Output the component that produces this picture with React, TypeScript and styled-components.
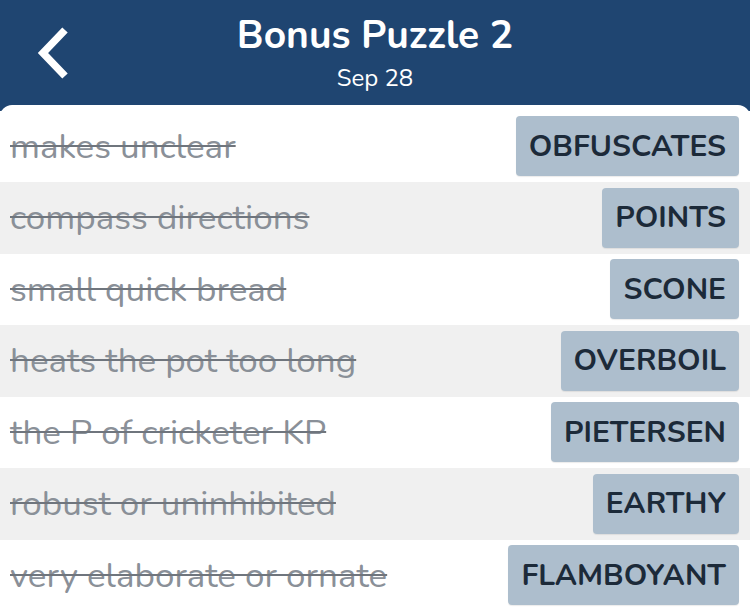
import { createGlobalStyle, styled } from 'styled-components';

type Entry = {
  clue: string;
  answer: string;
};

const entries: Entry[] = [
  { clue: 'makes unclear', answer: 'OBFUSCATES' },
  { clue: 'compass directions', answer: 'POINTS' },
  { clue: 'small quick bread', answer: 'SCONE' },
  { clue: 'heats the pot too long', answer: 'OVERBOIL' },
  { clue: 'the P of cricketer KP', answer: 'PIETERSEN' },
  { clue: 'robust or uninhibited', answer: 'EARTHY' },
  { clue: 'very elaborate or ornate', answer: 'FLAMBOYANT' },
];

const GlobalStyle = createGlobalStyle`
  html, body {
    margin: 0;
    padding: 0;
    background: #1f4571;
    overflow: hidden;
  }

  body {
    font-family: Nunito, Lato, "Noto Sans", sans-serif;
  }
`;

const Page = styled.div`
  width: 750px;
  height: 610px;
  display: flex;
  flex-direction: column;
  overflow: hidden;
`;

const Header = styled.header`
  height: 105px;
  flex-shrink: 0;
  background: #1f4571;
  color: #fff;
  display: grid;
  grid-template-columns: 100px 1fr 100px;
  align-items: start;
`;

const BackButton = styled.button`
  background: none;
  border: none;
  padding: 0 0 0 33px;
  height: 60px;
  display: flex;
  align-items: center;
  cursor: pointer;
  margin-top: 24px;
`;

const Titles = styled.div`
  display: flex;
  flex-direction: column;
  align-items: center;
  padding-top: 12px;
`;

const Title = styled.h1`
  margin: 0;
  font-size: 39px;
  font-weight: 700;
  line-height: 48px;
`;

const Subtitle = styled.p`
  margin: 2px 0 0;
  font-size: 24px;
  line-height: 32px;
  font-weight: 400;
`;

const Card = styled.main`
  flex: 1;
  background: #fff;
  border-radius: 12px 12px 0 0;
  padding-top: 5.5px;
`;

const Row = styled.div<{ $shaded: boolean }>`
  height: 71.5px;
  display: flex;
  align-items: center;
  justify-content: space-between;
  padding: 0 11px 0 10px;
  background: ${(p) => (p.$shaded ? '#f0f0f0' : '#fff')};
  box-sizing: border-box;
`;

const Clue = styled.span`
  font-size: 35px;
  color: #8a9098;
  text-decoration: line-through;
  text-decoration-thickness: 1.5px;
  text-decoration-color: #6f757d;
  white-space: nowrap;
`;

const Answer = styled.span`
  height: 60px;
  padding: 0 13px;
  display: flex;
  align-items: center;
  background: #adbecd;
  border-radius: 4px;
  box-shadow: 0 1px 1px rgba(0, 0, 0, 0.08);
  color: #1c2a39;
  font-size: 30px;
  font-weight: 700;
`;

function Chevron() {
  return (
    <svg width="40" height="56" viewBox="0 0 40 56">
      <path d="M32 4 L10 27 L32 50" fill="none" stroke="#fff" strokeWidth="7.5" strokeLinejoin="miter" />
    </svg>
  );
}

function App() {
  return (
    <Page>
      <GlobalStyle />
      <Header>
        <BackButton aria-label="Back">
          <Chevron />
        </BackButton>
        <Titles>
          <Title>Bonus Puzzle 2</Title>
          <Subtitle>Sep 28</Subtitle>
        </Titles>
        <div />
      </Header>
      <Card>
        {entries.map((e, i) => (
          <Row key={e.answer} $shaded={i % 2 === 1}>
            <Clue>{e.clue}</Clue>
            <Answer>{e.answer}</Answer>
          </Row>
        ))}
      </Card>
    </Page>
  );
}

export default App;
